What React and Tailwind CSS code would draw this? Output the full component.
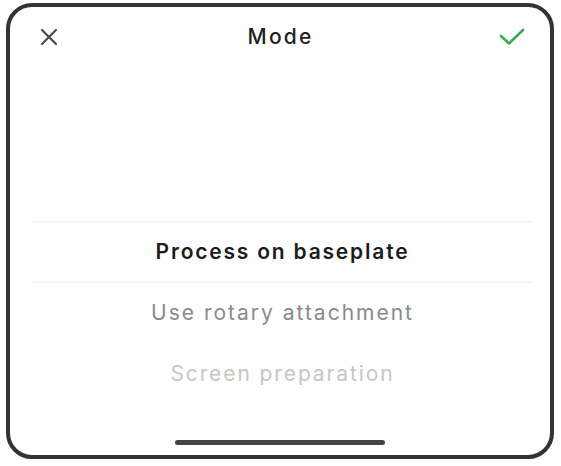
import React from 'react';

const options = [
  { label: 'Process on baseplate', cls: 'font-semibold text-[#1c1c1c] tracking-[1.8px]' },
  { label: 'Use rotary attachment', cls: 'font-normal text-[#8a8a8a] tracking-[2px]' },
  { label: 'Screen preparation', cls: 'font-normal text-[#c6c6c6] tracking-[1.9px]' },
];

const App = () => {
  return (
    <div className="w-[561px] h-[466px] bg-white pt-[3px] pl-[6px]" style={{ fontFamily: 'Inter, "Noto Sans", sans-serif' }}>
      <div className="w-[548px] h-[456px] border-[4px] border-[#333333] rounded-[26px] flex flex-col overflow-hidden">
        {/* header */}
        <div className="h-[60px] flex items-center justify-between pl-[30px] pr-[25px]">
          <svg width="18" height="18" viewBox="0 0 18 18" fill="none" stroke="#4a4a4a" strokeWidth="2.2" strokeLinecap="round">
            <path d="M2 2L16 16M16 2L2 16" />
          </svg>
          <span className="text-[21px] font-medium text-[#222] tracking-[2.2px] pl-[4px]">Mode</span>
          <svg width="26" height="18" viewBox="0 0 26 18" fill="none" stroke="#3daa4f" strokeWidth="2.6" strokeLinecap="round" strokeLinejoin="round">
            <path d="M2 8L10 15.5L24 2" />
          </svg>
        </div>

        <div className="h-[154px]" />

        {/* options */}
        <div className="flex flex-col ml-[22px] mr-[17px]">
          {options.map((o, i) => (
            <div
              key={o.label}
              className={`h-[61px] flex items-center justify-center text-[21px] ${i < 2 ? 'border-t border-[#f1f1f1]' : ''} ${o.cls}`}
            >
              {o.label}
            </div>
          ))}
        </div>

        <div className="flex-1 flex items-end justify-center pb-[10px]">
          <div className="w-[210px] h-[5px] rounded-full bg-[#444]" />
        </div>
      </div>
    </div>
  );
};

export default App;
